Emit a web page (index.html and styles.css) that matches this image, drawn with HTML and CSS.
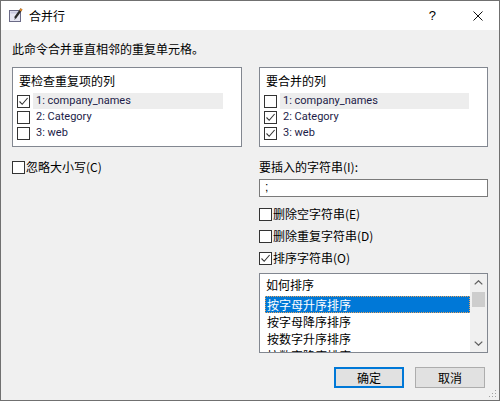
FILE: index.html
```html
<!DOCTYPE html>
<html lang="zh-CN">
<head>
<meta charset="utf-8">
<title>合并行</title>
<link rel="stylesheet" href="styles.css">
</head>
<body>
<div class="window">
  <div class="titlebar">
    <svg class="app-icon" viewBox="0 0 15 15" width="15" height="15">
      <rect x="1.5" y="2.5" width="11" height="11" fill="#e6e6f2" stroke="#6a6a86"/>
      <rect x="2.5" y="3.5" width="9" height="2" fill="#c9c9e0"/>
      <path d="M13.5 1 L7 10" stroke="#2b2b2b" stroke-width="2.2"/>
      <path d="M13.6 0.8 L12.2 2.8" stroke="#e08a2a" stroke-width="2.2"/>
      <path d="M7 10 L6.2 11.8 L7.9 10.7 Z" fill="#2b2b2b"/>
    </svg>
    <span class="title">合并行</span>
    <span class="help">?</span>
    <svg class="close" viewBox="0 0 10 10" width="10" height="10">
      <path d="M0.5 0.5 L9.5 9.5 M9.5 0.5 L0.5 9.5" stroke="#111" stroke-width="1"/>
    </svg>
  </div>

  <div class="content">
    <p class="desc">此命令合并垂直相邻的重复单元格。</p>

    <div class="columns">
      <div class="col">
        <div class="listbox check-list">
          <div class="list-header">要检查重复项的列</div>
          <div class="item">
            <span class="cb"><svg viewBox="0 0 11 11" width="11" height="11"><path d="M1.5 5.5 L4.2 8.3 L9.6 2" fill="none" stroke="#333" stroke-width="1.1"/></svg></span>
            <span class="item-label selected">1: company_names</span>
          </div>
          <div class="item">
            <span class="cb"></span>
            <span class="item-label">2: Category</span>
          </div>
          <div class="item">
            <span class="cb"></span>
            <span class="item-label">3: web</span>
          </div>
        </div>
        <div class="check-row spaced">
          <span class="cb"></span><span class="check-text">忽略大小写(C)</span>
        </div>
      </div>

      <div class="col">
        <div class="listbox check-list">
          <div class="list-header">要合并的列</div>
          <div class="item">
            <span class="cb"></span>
            <span class="item-label selected">1: company_names</span>
          </div>
          <div class="item">
            <span class="cb"><svg viewBox="0 0 11 11" width="11" height="11"><path d="M1.5 5.5 L4.2 8.3 L9.6 2" fill="none" stroke="#333" stroke-width="1.1"/></svg></span>
            <span class="item-label">2: Category</span>
          </div>
          <div class="item">
            <span class="cb"><svg viewBox="0 0 11 11" width="11" height="11"><path d="M1.5 5.5 L4.2 8.3 L9.6 2" fill="none" stroke="#333" stroke-width="1.1"/></svg></span>
            <span class="item-label">3: web</span>
          </div>
        </div>

        <div class="field-label">要插入的字符串(I):</div>
        <div class="textbox">;</div>

        <div class="check-group">
          <div class="check-row">
            <span class="cb"></span><span class="check-text">删除空字符串(E)</span>
          </div>
          <div class="check-row">
            <span class="cb"></span><span class="check-text">删除重复字符串(D)</span>
          </div>
          <div class="check-row">
            <span class="cb"><svg viewBox="0 0 11 11" width="11" height="11"><path d="M1.5 5.5 L4.2 8.3 L9.6 2" fill="none" stroke="#333" stroke-width="1.1"/></svg></span><span class="check-text">排序字符串(O)</span>
          </div>
        </div>

        <div class="listbox sort-list">
          <div class="sort-items">
            <div class="list-header sort-header">如何排序</div>
            <div class="sort-item selected">按字母升序排序</div>
            <div class="sort-item">按字母降序排序</div>
            <div class="sort-item">按数字升序排序</div>
            <div class="sort-item">按数字降序排序</div>
          </div>
          <div class="scrollbar">
            <div class="sb-arrow">
              <svg viewBox="0 0 9 5" width="9" height="5"><path d="M0.7 4.4 L4.5 0.8 L8.3 4.4" fill="none" stroke="#606060" stroke-width="1.3"/></svg>
            </div>
            <div class="sb-thumb"></div>
            <div class="sb-track"></div>
            <div class="sb-arrow">
              <svg viewBox="0 0 9 5" width="9" height="5"><path d="M0.7 0.6 L4.5 4.2 L8.3 0.6" fill="none" stroke="#606060" stroke-width="1.3"/></svg>
            </div>
          </div>
        </div>

        <div class="buttons">
          <button class="btn default">确定</button>
          <button class="btn">取消</button>
        </div>
      </div>
    </div>
  </div>

  <svg class="grip" viewBox="0 0 8 8" width="8" height="8">
    <rect x="6" y="0" width="1" height="1" fill="#a0a0a0"/>
    <rect x="3" y="3" width="1" height="1" fill="#a0a0a0"/>
    <rect x="6" y="3" width="1" height="1" fill="#a0a0a0"/>
    <rect x="0" y="6" width="1" height="1" fill="#a0a0a0"/>
    <rect x="3" y="6" width="1" height="1" fill="#a0a0a0"/>
    <rect x="6" y="6" width="1" height="1" fill="#a0a0a0"/>
  </svg>
</div>
</body>
</html>
```

FILE: styles.css
```css
* {
  box-sizing: border-box;
}

html,
body {
  margin: 0;
  padding: 0;
}

body {
  width: 500px;
  height: 401px;
  overflow: hidden;
  font-family: "Noto Sans CJK SC", "Noto Sans", sans-serif;
  font-size: 12px;
  color: #000;
}

.window {
  position: relative;
  width: 500px;
  height: 401px;
  border: 1px solid #707070;
  background: #f0f0f0;
  display: flex;
  flex-direction: column;
}

/* ---------- title bar ---------- */
.titlebar {
  flex: none;
  height: 29px;
  background: #fff;
  display: flex;
  align-items: center;
  padding: 0 16px 0 7px;
}

.app-icon {
  flex: none;
  display: block;
}

.title {
  margin-left: 6px;
  font-size: 12px;
  line-height: 14px;
}

.help {
  margin-left: auto;
  font-family: "Liberation Sans", sans-serif;
  font-size: 13px;
  line-height: 14px;
}

.close {
  display: block;
  margin-left: 37px;
}

/* ---------- content ---------- */
.content {
  flex: 1;
  padding: 12px 11px 0 11px;
}

.desc {
  margin: 0;
  line-height: 14px;
  height: 14px;
}

.columns {
  margin-top: 11px;
  display: grid;
  grid-template-columns: 230px 229px;
  column-gap: 17px;
  align-items: start;
}

.col {
  display: flex;
  flex-direction: column;
}

/* ---------- list boxes ---------- */
.listbox {
  height: 80px;
  background: #fff;
  border: 1px solid #828790;
  overflow: hidden;
}

.list-header {
  height: 25px;
  line-height: 25px;
  padding-left: 6px;
  white-space: nowrap;
}

.item {
  height: 16px;
  display: flex;
  align-items: center;
  padding-left: 4px;
}

.cb {
  flex: none;
  width: 13px;
  height: 13px;
  border: 1px solid #333;
  background: #fff;
  display: flex;
  align-items: center;
  justify-content: center;
}

.cb svg {
  display: block;
}

.item-label {
  flex: 1;
  height: 16px;
  margin: 0 18px 0 3px;
  padding-left: 3px;
  line-height: 16px;
  font-family: "Roboto", "Noto Sans", sans-serif;
  font-size: 11px;
  color: #1c1c48;
  white-space: nowrap;
}

.item-label.selected {
  background: #ededed;
}

/* ---------- check rows ---------- */
.check-row {
  height: 14px;
  display: flex;
  align-items: center;
}

.check-row.spaced {
  margin-top: 13px;
}

.check-text {
  margin-left: 1px;
  line-height: 14px;
  white-space: nowrap;
}

.check-group {
  margin-top: 10px;
  display: flex;
  flex-direction: column;
  gap: 8px;
}

.field-label {
  margin-top: 13px;
  line-height: 14px;
  height: 14px;
}

.textbox {
  margin-top: 5px;
  height: 18px;
  background: #fff;
  border: 1px solid #7a7a7a;
  padding-left: 5px;
  line-height: 15px;
  font-family: "Liberation Sans", sans-serif;
}

/* ---------- sort list ---------- */
.sort-list {
  margin-top: 8px;
  display: grid;
  grid-template-columns: 1fr 17px;
}

.sort-items {
  overflow: hidden;
  min-width: 0;
}

.sort-header {
  height: 22px;
  line-height: 22px;
}

.sort-item {
  height: 17px;
  line-height: 17px;
  margin-left: 5px;
  padding-left: 2px;
  white-space: nowrap;
}

.sort-item.selected {
  background: #0078d7;
  color: #fff;
  outline: 1px dotted #e9a25a;
  outline-offset: -1px;
}

.scrollbar {
  background: #f0f0f0;
  display: flex;
  flex-direction: column;
}

.sb-arrow {
  flex: none;
  height: 17px;
  display: flex;
  align-items: center;
  justify-content: center;
}

.sb-arrow svg {
  display: block;
}

.sb-thumb {
  flex: none;
  height: 15px;
  margin: 1px 2px 0 2px;
  background: #cdcdcd;
}

.sb-track {
  flex: 1;
}

/* ---------- buttons ---------- */
.buttons {
  margin-top: 14px;
  padding-right: 3px;
  display: flex;
  justify-content: flex-end;
  gap: 11px;
}

.btn {
  width: 70px;
  height: 21px;
  padding: 0;
  background: #e1e1e1;
  border: 1px solid #adadad;
  border-radius: 0;
  font-family: "Noto Sans CJK SC", sans-serif;
  font-size: 12px;
  line-height: 17px;
  color: #000;
}

.btn.default {
  border-color: #0078d7;
  box-shadow: inset 0 0 0 1px #0078d7;
}

/* ---------- resize grip ---------- */
.grip {
  position: absolute;
  right: 2px;
  bottom: 2px;
  display: block;
}
```
